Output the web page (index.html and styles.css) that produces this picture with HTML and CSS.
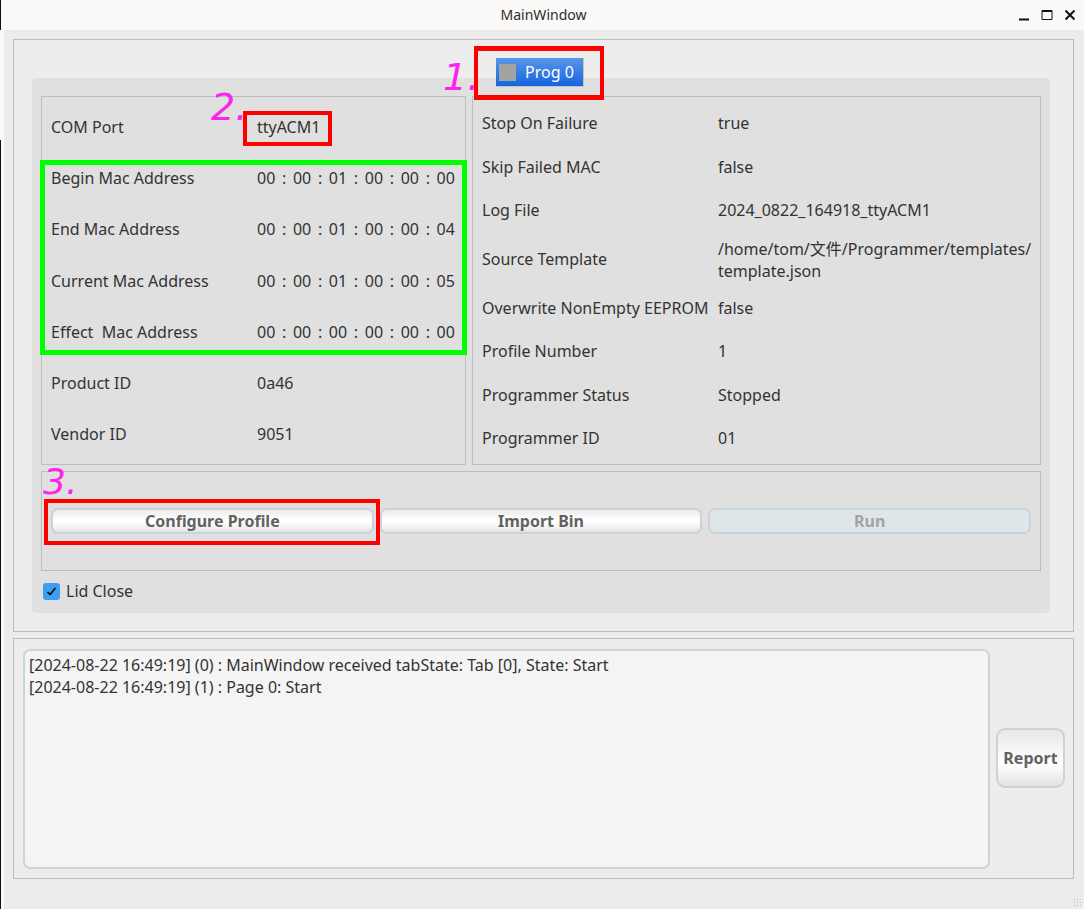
FILE: index.html
```html
<!DOCTYPE html>
<html lang="en">
<head>
    <meta charset="UTF-8">
    <title>MainWindow</title>
    <link rel="stylesheet" href="styles.css">
</head>
<body>
    <header class="titlebar">
        <span class="title">MainWindow</span>
        <div class="win-controls">
            <svg width="12" height="12" viewBox="0 0 12 12"><path d="M1 10.5h10" stroke="#111" stroke-width="2"/></svg>
            <svg width="12" height="12" viewBox="0 0 12 12"><path d="M1 1.5h10v9H1z" fill="none" stroke="#111" stroke-width="1"/><path d="M1 2h10" stroke="#111" stroke-width="2"/></svg>
            <svg width="12" height="12" viewBox="0 0 12 12"><path d="M1.5 1.5l9 9M10.5 1.5l-9 9" stroke="#111" stroke-width="2"/></svg>
        </div>
    </header>
    <main class="central">
        <section class="frame top-frame">
            <div class="tab-bar">
                <div class="tab"><span class="tab-led"></span>Prog 0</div>
            </div>
            <div class="pane">
                <div class="groups">
                    <div class="group info-left">
                        <div class="row"><span>COM Port</span><span>ttyACM1</span></div>
                        <div class="row"><span>Begin Mac Address</span><span class="mac"><i>00</i><i>:</i><i>00</i><i>:</i><i>01</i><i>:</i><i>00</i><i>:</i><i>00</i><i>:</i><i>00</i></span></div>
                        <div class="row"><span>End Mac Address</span><span class="mac"><i>00</i><i>:</i><i>00</i><i>:</i><i>01</i><i>:</i><i>00</i><i>:</i><i>00</i><i>:</i><i>04</i></span></div>
                        <div class="row row-low"><span>Current Mac Address</span><span class="mac"><i>00</i><i>:</i><i>00</i><i>:</i><i>01</i><i>:</i><i>00</i><i>:</i><i>00</i><i>:</i><i>05</i></span></div>
                        <div class="row"><span>Effect&nbsp; Mac Address</span><span class="mac"><i>00</i><i>:</i><i>00</i><i>:</i><i>00</i><i>:</i><i>00</i><i>:</i><i>00</i><i>:</i><i>00</i></span></div>
                        <div class="row"><span>Product ID</span><span>0a46</span></div>
                        <div class="row"><span>Vendor ID</span><span>9051</span></div>
                    </div>
                    <div class="group info-right">
                        <div class="row"><span>Stop On Failure</span><span>true</span></div>
                        <div class="row"><span>Skip Failed MAC</span><span>false</span></div>
                        <div class="row"><span>Log File</span><span>2024_0822_164918_ttyACM1</span></div>
                        <div class="row"><span>Source Template</span><span class="nowrap">/home/tom/文件/Programmer/templates/<br>template.json</span></div>
                        <div class="row"><span>Overwrite NonEmpty EEPROM</span><span>false</span></div>
                        <div class="row"><span>Profile Number</span><span>1</span></div>
                        <div class="row"><span>Programmer Status</span><span>Stopped</span></div>
                        <div class="row"><span>Programmer ID</span><span>01</span></div>
                    </div>
                </div>
                <div class="group actions">
                    <button class="btn">Configure Profile</button>
                    <button class="btn">Import Bin</button>
                    <button class="btn" disabled>Run</button>
                </div>
                <label class="check">
                    <span class="check-box">
                        <svg width="13" height="13" viewBox="0 0 13 13"><path d="M2.5 7l2.5 2.5 5.5-6.5" fill="none" stroke="#111" stroke-width="1.7"/></svg>
                    </span>
                    Lid Close
                </label>
            </div>
        </section>
        <section class="frame log-frame">
            <div class="log">
                <div>[2024-08-22 16:49:19] (0) : MainWindow received tabState: Tab [0], State: Start</div>
                <div>[2024-08-22 16:49:19] (1) : Page 0: Start</div>
            </div>
            <button class="btn report">Report</button>
        </section>
    </main>

    <!-- markup drawn over the screenshot -->
    <div class="mark red mark-tab"></div>
    <div class="mark red mark-port"></div>
    <div class="mark red mark-config"></div>
    <div class="mark green mark-mac"></div>
    <span class="note note-1">1.</span>
    <span class="note note-2">2.</span>
    <span class="note note-3">3.</span>
    <div class="grip"></div>
</body>
</html>
```

FILE: styles.css
```css
html, body { height: 100%; }
body { margin: 0; position: relative; width: 1084px; height: 909px; overflow: hidden; display: flex; flex-direction: column; font-family: "Noto Sans", "Noto Sans CJK SC", sans-serif; font-size: 16px; color: #333; background-color: #ececec; }

.titlebar { height: 30px; flex: none; display: flex; align-items: center; justify-content: center; position: relative; background-color: #faf9f7; font-size: 14px; color: #2e2e2e; border-left: 1px solid #111; box-sizing: border-box; padding: 0 0 2px 2px; }
.win-controls { position: absolute; right: 8px; top: 9px; display: flex; gap: 11px; }

.central { flex: 1; box-sizing: border-box; padding: 9px 10px 0 13px; display: flex; flex-direction: column; gap: 6px; background: linear-gradient(#111, #111) 0 110px / 1px 100% no-repeat, linear-gradient(#faf9f7, #faf9f7) 0 0 / 4px 100% no-repeat, #ececec; }
.frame { border: 1px solid #bdbdbd; box-sizing: border-box; }
.top-frame { height: 593px; padding: 18px 23px 0 18px; background-color: #ededed; }
.tab-bar { display: flex; justify-content: center; height: 29px; position: relative; z-index: 1; padding-right: 2px; }
.tab { width: 88px; box-sizing: border-box; display: flex; align-items: center; color: white; background: linear-gradient(#5a95e8, #1565e0); border-right: 1px solid #c4c4c4; border-bottom: 1px solid #c4c4c4; padding-left: 3px; }
.tab-led { width: 17px; height: 17px; background-color: #a3a3a3; margin-right: 9px; }

.pane { margin-top: -9px; height: 535px; box-sizing: border-box; padding: 18px 9px 0; background-color: #e0e0e0; border-radius: 4px; }
.groups { display: flex; gap: 6px; height: 369px; }
.group { border: 1px solid #bdbdbd; box-sizing: border-box; }
.info-left { width: 425px; flex: none; padding: 4px 9px; display: grid; grid-template-rows: repeat(7, 1fr); }
.info-right { flex: 1; padding: 4px 9px; display: grid; grid-template-rows: 44px 43.5px 43px 54.5px 43.5px 43.5px 43.5px 43.5px; }
.row { display: flex; align-items: center; }
.row-low { padding-top: 1px; }
.info-left .row > :first-child { width: 206px; flex: none; }
.info-right .row > :first-child { width: 236px; flex: none; }
.nowrap { white-space: nowrap; }
.mac { display: flex; justify-content: space-between; width: 198px; }
.mac i { font-style: normal; }

.actions { margin-top: 6px; height: 100px; padding: 0 9px; display: flex; align-items: center; gap: 6px; }
.btn { flex: 1; height: 26px; font: bold 16px "Noto Sans", sans-serif; color: #626262; border: 2px solid #cbd3da; border-radius: 7px; background: linear-gradient(#ececec, #fff 45%, #fff 55%, #e4e4e4); padding: 0; }
.btn:disabled { color: #a3a3a3; background: #dfe6ea; }

.check { display: flex; align-items: center; gap: 6px; margin-top: 10px; padding-left: 2px; height: 20px; }
.check-box { width: 17px; height: 17px; border-radius: 3px; background-color: #3d9df3; display: flex; align-items: center; justify-content: center; }

.log-frame { height: 241px; padding: 10px 8px 9px 9px; display: flex; gap: 6px; align-items: center; background-color: #ededed; }
.log { flex: 1; align-self: stretch; box-sizing: border-box; border: 2px solid #cbd3da; border-radius: 7px; background-color: #f4f4f4; padding: 3px 4px; line-height: 22px; }
.report { flex: none; width: 69px; height: 60px; border-radius: 9px; background: linear-gradient(#e8e8e8, #fff 60%, #e2e2e2); margin-bottom: 2px; }

.mark { position: absolute; box-sizing: border-box; }
.red { border: 4px solid #fe0000; }
.green { border: 5px solid #00ff00; }
.mark-tab { left: 474px; top: 46px; width: 130px; height: 54px; border-width: 5px 4px; }
.mark-port { left: 243px; top: 111px; width: 89px; height: 35px; }
.mark-config { left: 44px; top: 499px; width: 336px; height: 46px; border-width: 4px; }
.mark-mac { left: 40px; top: 160px; width: 427px; height: 195px; }

.note { position: absolute; color: #ff22ee; font-family: "DejaVu Sans", sans-serif; font-style: italic; line-height: 1; }
.note-1 { left: 443px; top: 58px; font-size: 38px; }
.note-2 { left: 211px; top: 88px; font-size: 38px; }
.note-3 { left: 43px; top: 464px; font-size: 36px; }

.grip { position: absolute; right: 1px; bottom: 1px; width: 10px; height: 10px; background: radial-gradient(#bbb 40%, transparent 45%) 0 0 / 3px 3px; }
```
